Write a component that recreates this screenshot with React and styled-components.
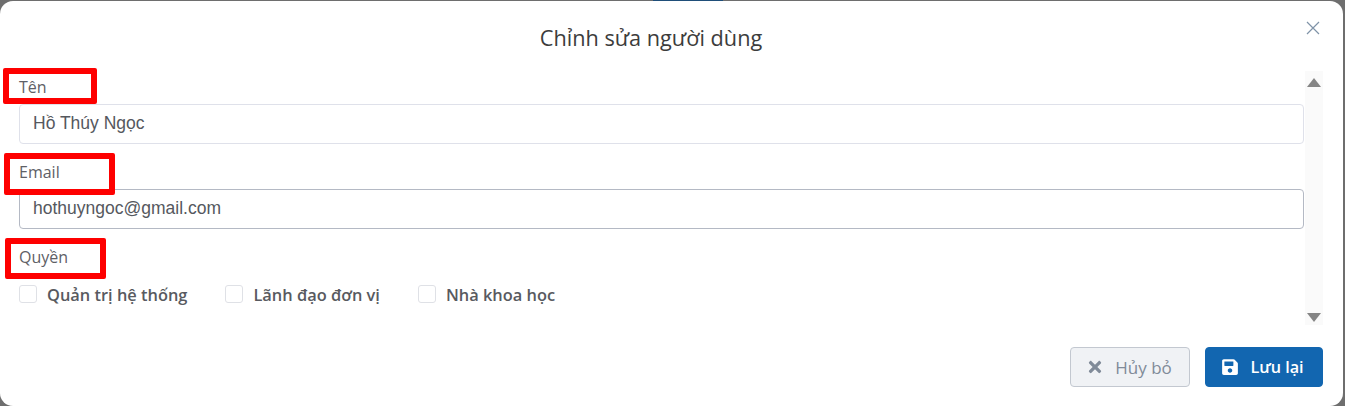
import React from "react";
import styled, { createGlobalStyle } from "styled-components";
import { FaTimes, FaSave } from "react-icons/fa";

const GlobalStyle = createGlobalStyle`
  html, body {
    margin: 0;
    padding: 0;
    width: 1345px;
    height: 406px;
    overflow: hidden;
    background: #6e6e6e;
  }
`;

const Backdrop = styled.div`
  width: 1345px;
  height: 406px;
  padding: 1px 2px 0 0;
  box-sizing: border-box;
  background:
    linear-gradient(
        90deg,
        transparent 653px,
        #1f4e79 653px,
        #1f4e79 723px,
        transparent 723px
      )
      top left / 100% 1px no-repeat,
    #6e6e6e;
`;

const Dialog = styled.div`
  position: relative;
  height: 405px;
  background: #fff;
  border-radius: 13px;
  display: flex;
  flex-direction: column;
  font-family: "Open Sans", "Noto Sans", sans-serif;
`;

const Header = styled.header`
  height: 70px;
  display: flex;
  align-items: flex-start;
  justify-content: center;
  padding: 22px 41px 0 0;
  box-sizing: border-box;
`;

const Title = styled.h2`
  margin: 0;
  font-size: 21.7px;
  line-height: 30px;
  font-weight: 400;
  color: #3c3c3c;
`;

const CloseButton = styled.button`
  position: absolute;
  top: 20px;
  right: 23px;
  width: 14px;
  height: 14px;
  padding: 0;
  border: 0;
  background: none;
  display: flex;
`;

const Body = styled.div`
  height: 254px;
  display: flex;
  padding-left: 19px;
`;

const Form = styled.form`
  width: 1285px;
`;

const Field = styled.div`
  height: 85px;
`;

const Label = styled.label`
  display: block;
  height: 33px;
  font-size: 16px;
  line-height: 32px;
  color: #5e6066;
`;

const Input = styled.input`
  display: block;
  width: 100%;
  height: 40px;
  box-sizing: border-box;
  padding: 0 13px 2px;
  border: 1px solid ${(p) => (p.$focused ? "#b4b9c4" : "#dfe1ea")};
  border-radius: 4px;
  background: #fff;
  font-family: "Liberation Sans", Arial, sans-serif;
  font-size: 17.5px;
  color: #55585e;
  outline: none;
`;

const Roles = styled.div`
  display: flex;
  margin-top: 8px;
`;

const Role = styled.label`
  display: flex;
  align-items: center;
  gap: 10px;
  margin-right: ${(p) => p.$gap}px;
  font-size: 16.4px;
  line-height: 26px;
  font-weight: 600;
  color: #585a60;
`;

const Box = styled.span`
  width: 18px;
  height: 18px;
  margin-top: -2px;
  box-sizing: border-box;
  border: 1px solid #dfe1e6;
  border-radius: 3px;
  background: #fff;
`;

const Scrollbar = styled.div`
  width: 18px;
  margin-left: 1px;
  background: #fafafa;
  display: flex;
  flex-direction: column;
  align-items: center;
  justify-content: space-between;
  padding: 7px 0 3px;
  box-sizing: border-box;
`;

const Arrow = styled.span`
  width: 0;
  height: 0;
  border-left: 7px solid transparent;
  border-right: 7px solid transparent;
  ${(p) => (p.$up ? "border-bottom" : "border-top")}: 9px solid #858585;
`;

const Footer = styled.footer`
  display: flex;
  justify-content: flex-end;
  gap: 15px;
  padding: 22px 20px 0 0;
`;

const Button = styled.button`
  height: 40px;
  width: ${(p) => p.$width}px;
  box-sizing: border-box;
  display: flex;
  align-items: center;
  justify-content: center;
  gap: ${(p) => (p.$primary ? 11 : 11)}px;
  border-radius: 4px;
  border: 1px solid ${(p) => (p.$primary ? "#1266b0" : "#c3c8d0")};
  background: ${(p) => (p.$primary ? "#1266b0" : "#f0f2f5")};
  color: ${(p) => (p.$primary ? "#fff" : "#808b99")};
  font-family: "Open Sans", "Noto Sans", sans-serif;
  font-size: ${(p) => (p.$primary ? 16.2 : 17)}px;
  font-weight: ${(p) => (p.$primary ? 600 : 400)};
  padding: 0 ${(p) => (p.$primary ? 3 : 2)}px 0 0;
`;

const Highlight = styled.div`
  position: absolute;
  left: ${(p) => p.$x}px;
  top: ${(p) => p.$y}px;
  width: ${(p) => p.$w}px;
  height: ${(p) => p.$h}px;
  box-sizing: border-box;
  border: 6px solid #fe0000;
  border-radius: 2px;
  pointer-events: none;
`;

export default function App() {
  return (
    <Backdrop>
      <GlobalStyle />
      <Dialog>
        <Header>
          <Title>Chỉnh sửa người dùng</Title>
          <CloseButton aria-label="close">
            <svg width="14" height="14" viewBox="0 0 14 14">
              <path d="M1 1 L13 13 M13 1 L1 13" stroke="#7f93a8" strokeWidth="1.2" fill="none" />
            </svg>
          </CloseButton>
        </Header>
        <Body>
          <Form>
            <Field>
              <Label>Tên</Label>
              <Input defaultValue="Hồ Thúy Ngọc" />
            </Field>
            <Field>
              <Label>Email</Label>
              <Input $focused defaultValue="hothuyngoc@gmail.com" />
            </Field>
            <Label>Quyền</Label>
            <Roles>
              <Role $gap={38}><Box />Quản trị hệ thống</Role>
              <Role $gap={38}><Box />Lãnh đạo đơn vị</Role>
              <Role $gap={0}><Box />Nhà khoa học</Role>
            </Roles>
          </Form>
          <Scrollbar>
            <Arrow $up />
            <Arrow />
          </Scrollbar>
        </Body>
        <Footer>
          <Button $width={120}><FaTimes size={18} />Hủy bỏ</Button>
          <Button $primary $width={118}><FaSave size={18} />Lưu lại</Button>
        </Footer>
        <Highlight $x={3} $y={67} $w={94} $h={36} />
        <Highlight $x={4} $y={152} $w={111} $h={42} />
        <Highlight $x={5} $y={237} $w={101} $h={41} />
      </Dialog>
    </Backdrop>
  );
}
